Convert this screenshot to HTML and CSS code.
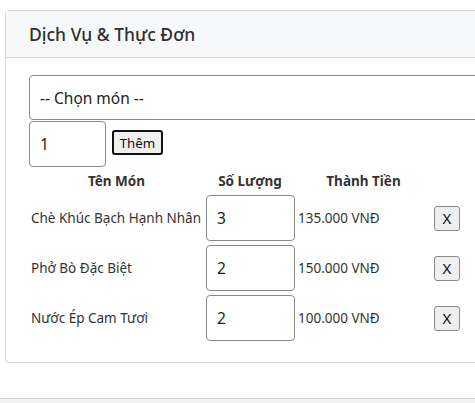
FILE: index.html
```html
<!DOCTYPE html>
<html lang="vi">
<head>
<meta charset="utf-8">
<link rel="stylesheet" href="styles.css">
</head>
<body>
<div class="page">
  <div class="card">
    <div class="card-header"><h5 class="card-title">Dịch Vụ &amp; Thực Đơn</h5></div>
    <div class="card-body">
      <select class="menu-select"><option>-- Chọn món --</option></select>
      <div class="add-row">
        <input class="qty-input" type="number" value="1">
        <button class="btn-add">Thêm</button>
      </div>
      <table class="order-table">
        <colgroup>
          <col class="c-name"><col class="c-qty"><col class="c-price"><col class="c-del">
        </colgroup>
        <thead>
          <tr><th>Tên Món</th><th>Số Lượng</th><th>Thành Tiền</th><th></th></tr>
        </thead>
        <tbody>
          <tr><td class="name">Chè Khúc Bạch Hạnh Nhân</td><td><input class="row-qty" type="number" value="3"></td><td class="price">135.000 VNĐ</td><td class="del"><button class="btn-del">X</button></td></tr>
          <tr><td class="name">Phở Bò Đặc Biệt</td><td><input class="row-qty" type="number" value="2"></td><td class="price">150.000 VNĐ</td><td class="del"><button class="btn-del">X</button></td></tr>
          <tr><td class="name">Nước Ép Cam Tươi</td><td><input class="row-qty" type="number" value="2"></td><td class="price">100.000 VNĐ</td><td class="del"><button class="btn-del">X</button></td></tr>
        </tbody>
      </table>
    </div>
  </div>
</div>
<div class="hscroll"></div>
</body>
</html>
```

FILE: styles.css
```css
html, body {
  margin: 0;
  padding: 0;
  overflow: hidden;
  background: #fff;
  font-family: "Noto Sans", "Open Sans", sans-serif;
  color: #333;
}
.page {
  height: 398px;
  box-sizing: border-box;
  padding: 10px 0 0 5px;
}
.card {
  width: 540px;
  border: 1px solid #d6d6d6;
  border-radius: 4px;
  background: #fff;
}
.card-header {
  background: #f7f8f9;
  border-bottom: 1px solid #d6d6d6;
  padding: 0 23px;
  height: 46px;
  display: flex;
  align-items: center;
}
.card-title {
  margin: 0;
  font-size: 17.5px;
  font-weight: 500;
  color: #2f2f2f;
}
.card-body {
  padding: 17px 0 18px 23px;
}
.menu-select {
  display: block;
  width: 100%;
  height: 45px;
  box-sizing: border-box;
  border: 1px solid #8a8a8a;
  border-radius: 4px;
  background: #fff;
  font-family: inherit;
  font-size: 15.5px;
  color: #222;
  padding: 0 10px;
  appearance: none;
  -webkit-appearance: none;
}
.add-row {
  display: flex;
  align-items: flex-start;
  gap: 6px;
  margin-top: 1px;
}
.qty-input {
  width: 77px;
  height: 46px;
  box-sizing: border-box;
  border: 1px solid #8a8a8a;
  border-radius: 4px;
  padding: 0 10px;
  font-family: inherit;
  font-size: 15.5px;
  color: #222;
  -moz-appearance: textfield;
}
input[type=number]::-webkit-inner-spin-button,
input[type=number]::-webkit-outer-spin-button { -webkit-appearance: none; margin: 0; }
.btn-add {
  margin-top: 9px;
  height: 25px;
  width: 51px;
  box-sizing: border-box;
  border: 2px solid #111;
  border-radius: 3px;
  background: #efefef;
  font-family: inherit;
  font-size: 13.3px;
  color: #111;
  padding: 0;
}
.order-table {
  margin-left: -1px;
  border-collapse: separate;
  border-spacing: 2px;
  table-layout: fixed;
  width: 438px;
  font-size: 13.5px;
}
.c-name { width: 173px; }
.c-qty { width: 90px; }
.c-price { width: 133px; }
.c-del { width: 32px; }
.order-table th {
  font-weight: 700;
  text-align: center;
  padding: 1px;
  height: 21px;
  color: #333;
}
.order-table td {
  padding: 1px;
  vertical-align: middle;
  color: #333;
  white-space: nowrap;
}
.row-qty {
  display: block;
  width: 89px;
  height: 46px;
  box-sizing: border-box;
  border: 1px solid #8a8a8a;
  border-radius: 4px;
  padding: 0 10px;
  font-family: inherit;
  font-size: 15.5px;
  color: #222;
}
.order-table td.del { padding-left: 2px; }
.btn-del {
  width: 26px;
  height: 25px;
  box-sizing: border-box;
  border: 1px solid #8a8a8a;
  border-radius: 3px;
  background: #efefef;
  font-family: inherit;
  font-size: 15px;
  color: #111;
  padding: 0;
}
.hscroll {
  height: 5px;
  border-top: 1px solid #d0d0d0;
  background: #f0f0f0;
}
```
